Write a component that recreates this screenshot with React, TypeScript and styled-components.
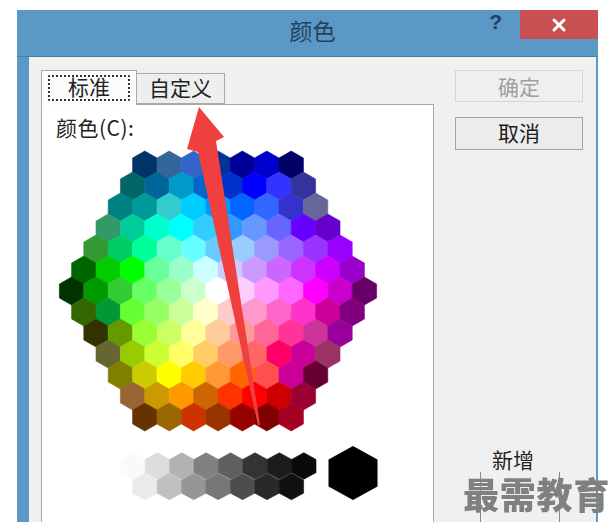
import React from 'react';
import styled, { createGlobalStyle } from 'styled-components';
import { X } from 'lucide-react';

const GlobalStyle = createGlobalStyle`
  html, body {
    margin: 0;
    padding: 0;
    background: #fff;
    overflow: hidden;
  }
`;

const PALETTE = [
  ['003366', '336699', '3366CC', '003399', '000099', '0000CC', '000066'],
  ['006666', '006699', '0099CC', '0066CC', '0033CC', '0000FF', '3333FF', '333399'],
  ['008080', '009999', '33CCCC', '00CCFF', '0099FF', '0066FF', '3366FF', '3333CC', '666699'],
  ['339966', '00CC99', '00FFCC', '00FFFF', '33CCFF', '3399FF', '6699FF', '6666FF', '6600FF', '6600CC'],
  ['339933', '00CC66', '00FF99', '66FFCC', '66FFFF', '66CCFF', '99CCFF', '9999FF', '9966FF', '9933FF', '9900FF'],
  ['006600', '00CC00', '00FF00', '66FF99', '99FFCC', 'CCFFFF', 'CCCCFF', 'CC99FF', 'CC66FF', 'CC33FF', 'CC00FF', '9900CC'],
  ['003300', '009900', '33CC33', '66FF66', '99FF99', 'CCFFCC', 'FFFFFF', 'FFCCFF', 'FF99FF', 'FF66FF', 'FF00FF', 'CC00CC', '660066'],
  ['336600', '009933', '66FF33', '99FF66', 'CCFF99', 'FFFFCC', 'FFCCCC', 'FF99CC', 'FF66CC', 'FF33CC', 'CC0099', '800080'],
  ['333300', '669900', '99FF33', 'CCFF66', 'FFFF99', 'FFCC99', 'FF9999', 'FF6699', 'FF3399', 'CC3399', '990099'],
  ['666633', '99CC00', 'CCFF33', 'FFFF66', 'FFCC66', 'FF9966', 'FF6666', 'FF0066', 'CC0099', '993366'],
  ['808000', 'CCCC00', 'FFFF00', 'FFCC00', 'FF9933', 'FF6600', 'FF5050', 'CC0099', '660033'],
  ['996633', 'CC9900', 'FF9900', 'CC6600', 'FF3300', 'FF0000', 'CC0000', '990033'],
  ['663300', '996600', 'CC3300', '993300', '990000', '800000', 'A50021'],
];

const GRAYS_TOP = ['FAFAFA', 'DDDDDD', 'B2B2B2', '808080', '5F5F5F', '333333', '1C1C1C', '0A0A0A'];
const GRAYS_BOTTOM = ['EAEAEA', 'C0C0C0', '969696', '777777', '4D4D4D', '292929', '111111'];

// chart svg sits at page (56,146), so subtract that from page coordinates
const hexPoints = (cx: number, cy: number, w: number, h: number) => {
  const x = cx - 56;
  const y = cy - 146;
  return [
    [x, y - h / 2],
    [x + w / 2, y - h / 4],
    [x + w / 2, y + h / 4],
    [x, y + h / 2],
    [x - w / 2, y + h / 4],
    [x - w / 2, y - h / 4],
  ]
    .map((p) => p.join(','))
    .join(' ');
};

const ColorChart = () => (
  <ChartSvg viewBox="0 0 345 354" width={345} height={354}>
    {PALETTE.map((row, r) =>
      row.map((c, i) => (
        <polygon
          key={`${r}-${i}`}
          points={hexPoints(218 + (i - (row.length - 1) / 2) * 24.4, 164 + r * 21, 24.4, 28)}
          fill={`#${c}`}
          stroke={`#${c}`}
          strokeWidth={0.6}
        />
      )),
    )}
    {GRAYS_TOP.map((c, i) => (
      <polygon key={c} points={hexPoints(133 + i * 24.4, 465, 24.4, 26.5)} fill={`#${c}`} stroke={`#${c}`} strokeWidth={0.6} />
    ))}
    {GRAYS_BOTTOM.map((c, i) => (
      <polygon key={c} points={hexPoints(145 + i * 24.4, 485.5, 24.4, 26.5)} fill={`#${c}`} stroke={`#${c}`} strokeWidth={0.6} />
    ))}
    <polygon points={hexPoints(353, 472, 49, 54)} fill="#000" />
  </ChartSvg>
);

const App = () => (
  <>
    <GlobalStyle />
    <Dialog>
      <TitleBar>
        <span />
        <Title>颜色</Title>
        <TitleActions>
          <HelpMark>?</HelpMark>
          <CloseButton>
            <X size={20} strokeWidth={3.6} color="#fff" />
          </CloseButton>
        </TitleActions>
      </TitleBar>
      <Body>
        <LeftColumn>
          <TabRow>
            <Tab $active>
              <FocusRing>标准</FocusRing>
            </Tab>
            <Tab>自定义</Tab>
          </TabRow>
          <Panel>
            <ColorLabel>颜色(C):</ColorLabel>
            <ColorChart />
          </Panel>
        </LeftColumn>
        <SideColumn>
          <Button $disabled>确定</Button>
          <Button>取消</Button>
          <NewColor>
            <NewLabel>新增</NewLabel>
            <NewSwatch />
          </NewColor>
        </SideColumn>
      </Body>
      <Arrow viewBox="0 0 100 340" width={100} height={340}>
        <polygon
          points="27,3 52,33 44,37 88,321 86,321 26,48 15,45"
          fill="#ef3f3f"
        />
      </Arrow>
      <Watermark>最需教育</Watermark>
    </Dialog>
  </>
);

const Dialog = styled.div`
  position: relative;
  display: flex;
  flex-direction: column;
  width: 581px;
  height: 512px;
  margin: 10px 0 0 17px;
  background: #5b98c5;
  font-family: 'Noto Sans CJK SC', 'Noto Sans', sans-serif;
  filter: blur(0.7px);
`;

const TitleBar = styled.div`
  display: grid;
  grid-template-columns: 1fr auto 1fr;
  height: 46px;
  flex: none;
  border-bottom: 1px solid #4f7f9f;
`;

const Title = styled.div`
  padding: 3px 0 0 10px;
  font-size: 23px;
  line-height: 34px;
  color: #24425c;
`;

const TitleActions = styled.div`
  display: flex;
  justify-content: flex-end;
  align-items: flex-start;
`;

const HelpMark = styled.span`
  margin-right: 18px;
  font-family: 'Liberation Sans', sans-serif;
  font-size: 21px;
  font-weight: 700;
  line-height: 23px;
  color: #1d4263;
`;

const CloseButton = styled.div`
  display: flex;
  align-items: center;
  justify-content: center;
  width: 78px;
  height: 29px;
  background: #c95050;
`;

const Body = styled.div`
  flex: 1;
  display: flex;
  gap: 21px;
  min-height: 0;
  margin: 0 2px 0 12px;
  padding: 12px 0 0 12px;
  background: #f0f0f0;
  border-top: 1px solid #e4f0f8;
  overflow: hidden;
`;

const LeftColumn = styled.div`
  display: flex;
  flex-direction: column;
  width: 393px;
`;

const TabRow = styled.div`
  display: flex;
  align-items: flex-end;
  height: 34px;
  flex: none;
`;

const Tab = styled.div<{ $active?: boolean }>`
  position: relative;
  box-sizing: border-box;
  display: flex;
  align-items: center;
  justify-content: center;
  width: ${(p) => (p.$active ? '96px' : '88px')};
  height: ${(p) => (p.$active ? '35px' : '31px')};
  margin-bottom: ${(p) => (p.$active ? '-1px' : '0')};
  padding-bottom: ${(p) => (p.$active ? '1px' : '3px')};
  border: 1px solid #a9a9a9;
  border-left-width: ${(p) => (p.$active ? '1px' : '0')};
  border-bottom: ${(p) => (p.$active ? '0' : '1px solid #a9a9a9')};
  background: ${(p) => (p.$active ? '#fbfbfb' : '#eeeeee')};
  font-size: 21px;
  line-height: 25px;
  color: #222;
  z-index: ${(p) => (p.$active ? 1 : 0)};
`;

const FocusRing = styled.span`
  box-sizing: border-box;
  display: flex;
  align-items: center;
  justify-content: center;
  width: 82px;
  height: 26px;
  padding-bottom: 2px;
  border: 2px dotted #333;
  border-radius: 2px;
`;

const Panel = styled.div`
  flex: 1;
  min-height: 0;
  padding: 9px 14px 0;
  background: #fff;
  border: 1px solid #a9a9a9;
  border-bottom: 0;
`;

const ColorLabel = styled.div`
  height: 33px;
  font-size: 21px;
  line-height: 26px;
  letter-spacing: 0.5px;
  color: #222;
`;

const ChartSvg = styled.svg`
  display: block;
`;

const SideColumn = styled.div`
  display: flex;
  flex-direction: column;
  gap: 15px;
  width: 128px;
`;

const Button = styled.div<{ $disabled?: boolean }>`
  box-sizing: border-box;
  display: flex;
  align-items: center;
  justify-content: center;
  height: ${(p) => (p.$disabled ? '32px' : '33px')};
  padding-bottom: ${(p) => (p.$disabled ? '0' : '3px')};
  border: 1px solid ${(p) => (p.$disabled ? '#d6d6d6' : '#a4a4a4')};
  background: ${(p) => (p.$disabled ? '#efefef' : '#ececec')};
  font-size: 21px;
  line-height: 26px;
  color: ${(p) => (p.$disabled ? '#a0a0a0' : '#1c1c1c')};
`;

const NewColor = styled.div`
  display: flex;
  flex-direction: column;
  align-items: flex-start;
  margin-top: auto;
`;

const NewLabel = styled.div`
  width: 116px;
  height: 26px;
  text-align: center;
  font-size: 21px;
  line-height: 26px;
  color: #222;
`;

const NewSwatch = styled.div`
  box-sizing: border-box;
  width: 80px;
  height: 50px;
  margin: 0 0 0 25px;
  border-left: 1px solid #8a8a8a;
  border-right: 1px solid #8a8a8a;
`;

const Arrow = styled.svg`
  position: absolute;
  left: 155px;
  top: 94px;
`;

const Watermark = styled.div`
  position: absolute;
  left: 446px;
  top: 465px;
  font-size: 36px;
  font-weight: 900;
  line-height: 36px;
  letter-spacing: 0.8px;
  white-space: nowrap;
  color: #808080;
`;

export default App;
